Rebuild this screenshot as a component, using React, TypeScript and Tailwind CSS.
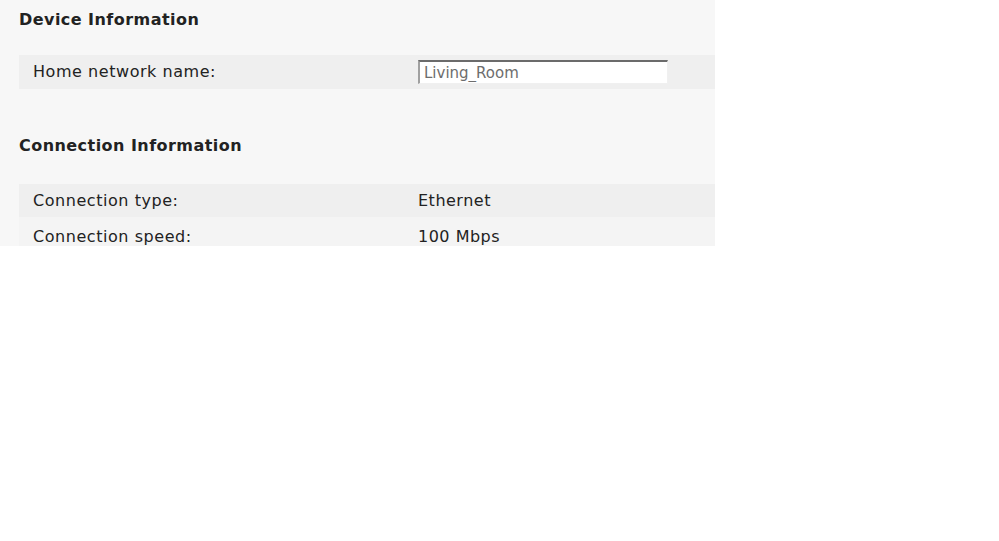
const font = { fontFamily: '"DejaVu Sans", Verdana, sans-serif' };

const Row = ({ label, children, tone }: { label: string; children: React.ReactNode; tone: string }) => (
  <div className={`flex shrink-0 items-center ${tone}`}>
    <div className="w-[399px] pl-[14px] text-[16px] tracking-[0.55px] text-[#222]">{label}</div>
    <div className="flex-1 text-[16px] tracking-[0.5px] text-[#222]">{children}</div>
  </div>
);

export default function App() {
  return (
    <div className="w-[999px] h-[541px] bg-white" style={font}>
      <div className="flex flex-col w-[715px] h-[246px] bg-[#f7f7f7] pl-[19px] overflow-hidden">
        <h2 className="shrink-0 pt-[8px] h-[55px] text-[16px] tracking-[0.45px] font-bold text-[#222]">Device Information</h2>
        <Row label="Home network name:" tone="bg-[#efefef] h-[34px]">
          <input
            defaultValue="Living_Room"
            className="block w-[250px] h-[24px] bg-white border-t-2 border-l-2 border-t-[#6b6b6b] border-l-[#a0a0a0] border-r border-b border-r-[#f0f0f0] border-b-[#f0f0f0] pl-[4px] text-[15px] tracking-normal text-[#6d6d6d] outline-none"
          />
        </Row>
        <h2 className="shrink-0 pt-[45px] h-[95px] text-[16px] tracking-[0.45px] font-bold text-[#222]">Connection Information</h2>
        <Row label="Connection type:" tone="bg-[#efefef] h-[33px]">Ethernet</Row>
        <Row label="Connection speed:" tone="bg-[#f4f4f4] h-[40px]">100 Mbps</Row>
      </div>
    </div>
  );
}
